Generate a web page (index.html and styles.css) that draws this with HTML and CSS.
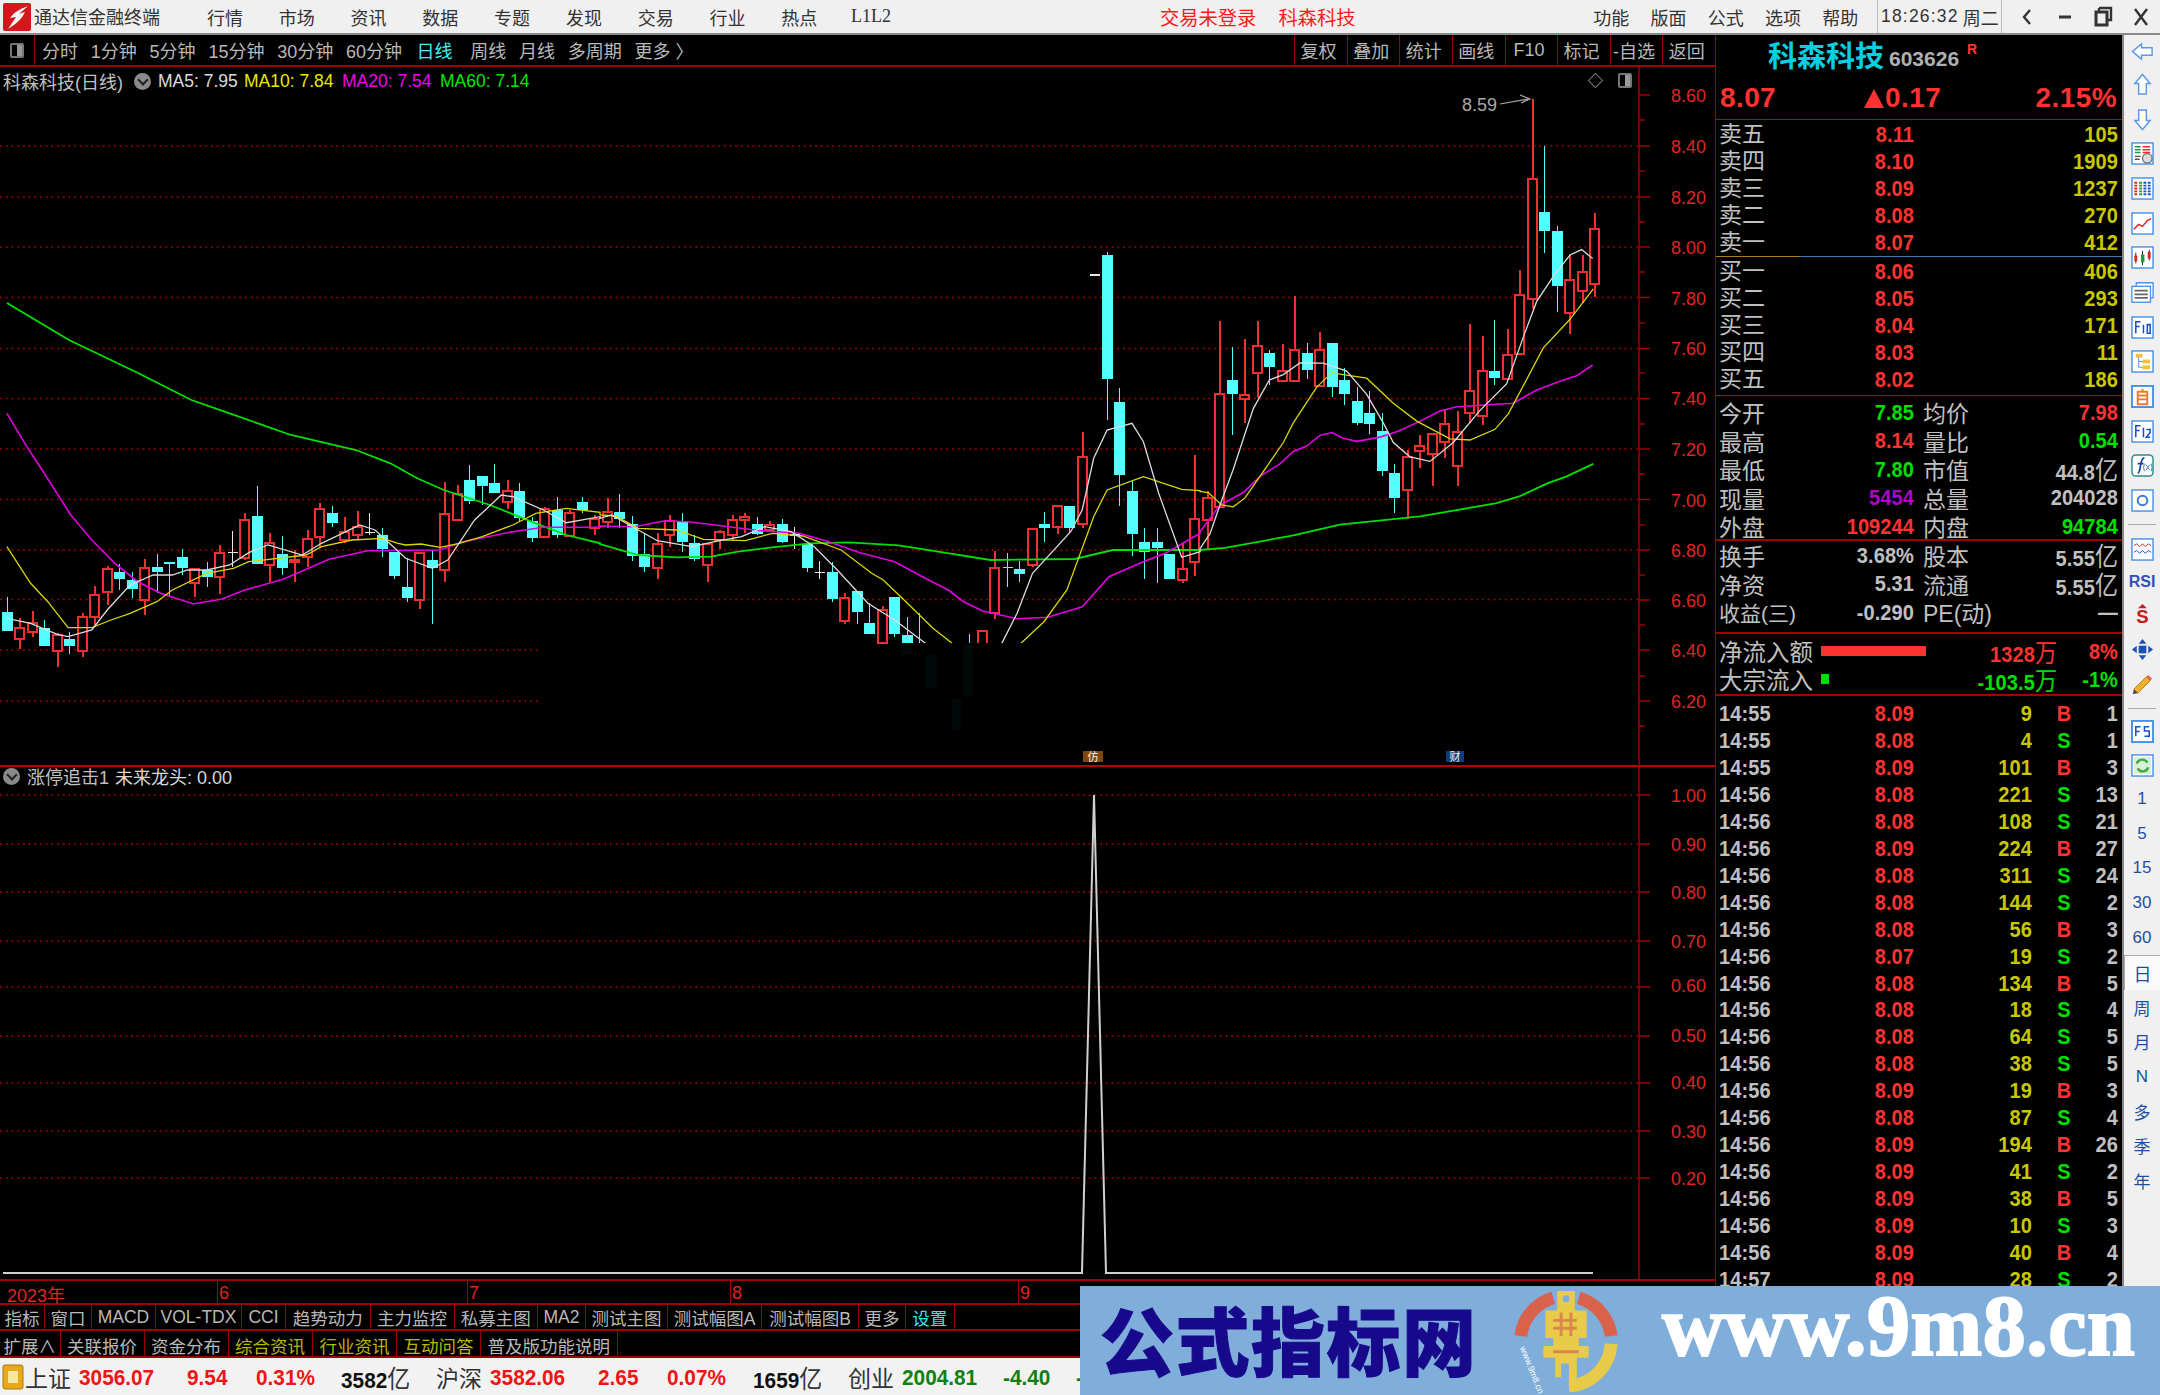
FILE: index.html
```html
<!DOCTYPE html>
<html lang="zh-CN">
<head>
<meta charset="utf-8">
<title>通达信金融终端</title>
<link rel="stylesheet" href="styles.css">
</head>
<body>
<div class="app">
  <header class="menubar">
    <svg class="logo" viewBox="0 0 28 28"><rect width="28" height="28" rx="2" fill="#d8141c"/><path d="M25 3 C17 6 11 9 7 15 L13 14 L5 26 C13 21 19 16 22 9 L16 11 Z" fill="#f4f4f4"/></svg>
    <span class="apptitle">通达信金融终端</span>
    <nav class="menu-main"><span>行情</span><span>市场</span><span>资讯</span><span>数据</span><span>专题</span><span>发现</span><span>交易</span><span>行业</span><span>热点</span><span class="l1l2">L1L2</span></nav>
    <div class="menu-red"><span>交易未登录</span><span>科森科技</span></div>
    <nav class="menu-right"><span>功能</span><span>版面</span><span>公式</span><span>选项</span><span>帮助</span></nav>
    <div class="clock"><span>18:26:32</span><span>周二</span></div>
    <div class="winctl">
      <svg viewBox="0 0 36 33"><path d="M21 10 L15 17 L21 24" fill="none" stroke="#333" stroke-width="2.4"/></svg>
      <svg viewBox="0 0 38 33"><path d="M13 17 H25" stroke="#333" stroke-width="3"/></svg>
      <svg viewBox="0 0 38 33"><path d="M15 8 H27 V20 H24 M15 8 V11" fill="none" stroke="#333" stroke-width="2.4"/><rect x="12" y="12" width="11" height="13" fill="none" stroke="#333" stroke-width="3"/></svg>
      <svg viewBox="0 0 38 33"><path d="M13 9 L25 25 M25 9 L13 25" stroke="#333" stroke-width="2.4"/></svg>
    </div>
  </header>

  <div class="workspace">
    <section class="left">
      <div class="toolbar">
        <div class="tb-icon"><span class="minibox"></span></div>
        <div class="tb-periods"><span>分时</span><span>1分钟</span><span>5分钟</span><span>15分钟</span><span>30分钟</span><span>60分钟</span><span class="on">日线</span><span>周线</span><span>月线</span><span>多周期</span><span>更多 〉</span></div>
        <div class="tb-actions"><span>复权</span><span>叠加</span><span>统计</span><span>画线</span><span>F10</span><span>标记</span><span>-自选</span><span>返回</span></div>
      </div>

      <div class="pane pane-main">
        <svg id="mainChart" class="chart" viewBox="0 67 1715 698" width="1715" height="698">
          <g class="grid"><path d="M0 146H1640M0 197H1640M0 247H1640M0 297.5H1640M0 348.5H1640M0 398.5H1640M0 449H1640M0 499.5H1640M0 550H1640M0 599.5H1640M0 650H538M0 701H538"/></g>
          <path class="axis" d="M1639 67V765M1639 95H1650M1639 120H1645M1639 146H1650M1639 171H1645M1639 197H1650M1639 222H1645M1639 247H1650M1639 272H1645M1639 297.5H1650M1639 323H1645M1639 348.5H1650M1639 373H1645M1639 398.5H1650M1639 424H1645M1639 449H1650M1639 474H1645M1639 499.5H1650M1639 525H1645M1639 550H1650M1639 575H1645M1639 600H1650M1639 625H1645M1639 650H1650M1639 676H1645M1639 701H1650M1639 726H1645"/>
          <g class="axis-labels"><text x="1671" y="102">8.60</text><text x="1671" y="153">8.40</text><text x="1671" y="204">8.20</text><text x="1671" y="254">8.00</text><text x="1671" y="305">7.80</text><text x="1671" y="355">7.60</text><text x="1671" y="405">7.40</text><text x="1671" y="456">7.20</text><text x="1671" y="507">7.00</text><text x="1671" y="557">6.80</text><text x="1671" y="607">6.60</text><text x="1671" y="657">6.40</text><text x="1671" y="708">6.20</text></g>
          <g id="candles"></g>
          <g id="maLines"></g>
          <g id="mask"></g>
          <text class="high-label" x="1462" y="111">8.59</text>
          <path class="high-arrow" d="M1500 104 L1528 99 M1520 95 L1530 99 L1521 103"/>
          <rect class="tag tag-a" x="1083" y="751" width="20" height="11"/><text class="tag-text" x="1093" y="761">仿</text>
          <rect class="tag tag-b" x="1446" y="751" width="18" height="11"/><text class="tag-text" x="1455" y="761">财</text>
        </svg>
        <div class="legend">
          <span class="lg-name">科森科技(日线)</span><span class="chev"></span>
          <span class="lg-5">MA5: 7.95</span><span class="lg-10">MA10: 7.84</span><span class="lg-20">MA20: 7.54</span><span class="lg-60">MA60: 7.14</span>
        </div>
        <div class="corner-icons"><span class="diamond"></span><span class="minibox"></span></div>
      </div>

      <div class="pane pane-sub">
        <svg class="chart" viewBox="0 765 1715 516" width="1715" height="516">
          <g class="grid"><path d="M0 795H1640M0 844H1640M0 892H1640M0 941H1640M0 987H1640M0 1036H1640M0 1083H1640M0 1131H1640M0 1178H1640"/></g>
          <path class="axis" d="M1639 765V1281M1639 795H1650M1639 844H1650M1639 892H1650M1639 941H1650M1639 987H1650M1639 1036H1650M1639 1083H1650M1639 1131H1650M1639 1178H1650"/>
          <g class="axis-labels"><text x="1671" y="802">1.00</text><text x="1671" y="851">0.90</text><text x="1671" y="899">0.80</text><text x="1671" y="948">0.70</text><text x="1671" y="992">0.60</text><text x="1671" y="1042">0.50</text><text x="1671" y="1089">0.40</text><text x="1671" y="1138">0.30</text><text x="1671" y="1185">0.20</text></g>
          <path class="signal" d="M3 1273H1082L1094 795L1106 1273H1593"/>
        </svg>
        <div class="legend legend-sub"><span class="chev"></span><span>涨停追击1</span><span class="lg-white">未来龙头: 0.00</span></div>
      </div>

      <div class="dates"><span class="d-y">2023年</span><span class="d-a">6</span><span class="d-b">7</span><span class="d-c">8</span><span class="d-d">9</span></div>

      <div class="tabs tabs-a"><span>指标</span><span>窗口</span><span>MACD</span><span>VOL-TDX</span><span>CCI</span><span>趋势动力</span><span>主力监控</span><span>私募主图</span><span>MA2</span><span>测试主图</span><span>测试幅图A</span><span>测试幅图B</span><span>更多</span><span class="cy">设置</span></div>
      <div class="tabs tabs-b"><span>扩展∧</span><span>关联报价</span><span>资金分布</span><span class="yl">综合资讯</span><span class="yl">行业资讯</span><span class="yl">互动问答</span><span>普及版功能说明</span></div>

      <div class="status">
        <svg viewBox="0 0 22 28"><rect x="1" y="2" width="20" height="24" rx="2" fill="#e8a818" stroke="#a87a10"/><rect x="6" y="8" width="10" height="12" fill="#f8e6a0"/></svg>
        <span class="st-l">上证</span><b class="up">3056.07</b><b class="up">9.54</b><b class="up">0.31%</b><b class="bk">3582<i>亿</i></b>
        <span class="st-l">沪深</span><b class="up">3582.06</b><b class="up">2.65</b><b class="up">0.07%</b><b class="bk">1659<i>亿</i></b>
        <span class="st-l">创业</span><b class="dn">2004.81</b><b class="dn">-4.40</b><b class="dn">-0.22%</b>
      </div>
    </section>

    <aside class="panel">
      <div class="p-title"><span class="p-name">科森科技</span><span class="p-code">603626</span><sup class="p-r">R</sup></div>
      <div class="p-price"><span>8.07</span><span class="p-chg"><svg viewBox="0 0 20 19"><path d="M10 0L20 19H0Z" fill="#ff3232"/></svg>0.17</span><span class="p-pct">2.15%</span></div>

      <div class="book sell">
        <div><span>卖五</span><b class="up">8.11</b><b class="yl">105</b></div>
        <div><span>卖四</span><b class="up">8.10</b><b class="yl">1909</b></div>
        <div><span>卖三</span><b class="up">8.09</b><b class="yl">1237</b></div>
        <div><span>卖二</span><b class="up">8.08</b><b class="yl">270</b></div>
        <div><span>卖一</span><b class="up">8.07</b><b class="yl">412</b></div>
      </div>
      <div class="book buy">
        <div><span>买一</span><b class="up">8.06</b><b class="yl">406</b></div>
        <div><span>买二</span><b class="up">8.05</b><b class="yl">293</b></div>
        <div><span>买三</span><b class="up">8.04</b><b class="yl">171</b></div>
        <div><span>买四</span><b class="up">8.03</b><b class="yl">11</b></div>
        <div><span>买五</span><b class="up">8.02</b><b class="yl">186</b></div>
      </div>

      <div class="stats s-one">
        <div><span>今开</span><b class="gn">7.85</b><span>均价</span><b class="up">7.98</b></div>
        <div><span>最高</span><b class="up">8.14</b><span>量比</span><b class="gn">0.54</b></div>
        <div><span>最低</span><b class="gn">7.80</b><span>市值</span><b>44.8<i>亿</i></b></div>
        <div><span>现量</span><b class="pu">5454</b><span>总量</span><b>204028</b></div>
        <div><span>外盘</span><b class="up">109244</b><span>内盘</span><b class="gn">94784</b></div>
      </div>
      <div class="stats s-two">
        <div><span>换手</span><b>3.68%</b><span>股本</span><b>5.55<i>亿</i></b></div>
        <div><span>净资</span><b>5.31</b><span>流通</span><b>5.55<i>亿</i></b></div>
        <div><span class="wide">收益(三)</span><b>-0.290</b><span>PE(动)</span><b>—</b></div>
      </div>
      <div class="flow">
        <div><span>净流入额</span><em class="bar bar-up"></em><b class="up">1328<i>万</i></b><b class="up">8%</b></div>
        <div><span>大宗流入</span><em class="bar bar-dn"></em><b class="gn">-103.5<i>万</i></b><b class="gn">-1%</b></div>
      </div>
      <div class="trades">
        <div><b>14:55</b><b class="up">8.09</b><b class="yl">9</b><b class="up">B</b><b>1</b></div>
        <div><b>14:55</b><b class="up">8.08</b><b class="yl">4</b><b class="gn">S</b><b>1</b></div>
        <div><b>14:55</b><b class="up">8.09</b><b class="yl">101</b><b class="up">B</b><b>3</b></div>
        <div><b>14:56</b><b class="up">8.08</b><b class="yl">221</b><b class="gn">S</b><b>13</b></div>
        <div><b>14:56</b><b class="up">8.08</b><b class="yl">108</b><b class="gn">S</b><b>21</b></div>
        <div><b>14:56</b><b class="up">8.09</b><b class="yl">224</b><b class="up">B</b><b>27</b></div>
        <div><b>14:56</b><b class="up">8.08</b><b class="yl">311</b><b class="gn">S</b><b>24</b></div>
        <div><b>14:56</b><b class="up">8.08</b><b class="yl">144</b><b class="gn">S</b><b>2</b></div>
        <div><b>14:56</b><b class="up">8.08</b><b class="yl">56</b><b class="up">B</b><b>3</b></div>
        <div><b>14:56</b><b class="up">8.07</b><b class="yl">19</b><b class="gn">S</b><b>2</b></div>
        <div><b>14:56</b><b class="up">8.08</b><b class="yl">134</b><b class="up">B</b><b>5</b></div>
        <div><b>14:56</b><b class="up">8.08</b><b class="yl">18</b><b class="gn">S</b><b>4</b></div>
        <div><b>14:56</b><b class="up">8.08</b><b class="yl">64</b><b class="gn">S</b><b>5</b></div>
        <div><b>14:56</b><b class="up">8.08</b><b class="yl">38</b><b class="gn">S</b><b>5</b></div>
        <div><b>14:56</b><b class="up">8.09</b><b class="yl">19</b><b class="up">B</b><b>3</b></div>
        <div><b>14:56</b><b class="up">8.08</b><b class="yl">87</b><b class="gn">S</b><b>4</b></div>
        <div><b>14:56</b><b class="up">8.09</b><b class="yl">194</b><b class="up">B</b><b>26</b></div>
        <div><b>14:56</b><b class="up">8.09</b><b class="yl">41</b><b class="gn">S</b><b>2</b></div>
        <div><b>14:56</b><b class="up">8.09</b><b class="yl">38</b><b class="up">B</b><b>5</b></div>
        <div><b>14:56</b><b class="up">8.09</b><b class="yl">10</b><b class="gn">S</b><b>3</b></div>
        <div><b>14:56</b><b class="up">8.09</b><b class="yl">40</b><b class="up">B</b><b>4</b></div>
        <div><b>14:57</b><b class="up">8.09</b><b class="yl">28</b><b class="gn">S</b><b>2</b></div>
      </div>
    </aside>

    <nav class="strip">
      <div class="r-a r-first"><svg viewBox="0 0 24 20"><path d="M1.500 10L11 2V6H22V14H11V18Z" class="ic-arrow"/></svg></div>
      <div class="r-a"><svg viewBox="0 0 20 24"><path d="M10 1.500L18 11H14V22H6V11H2Z" class="ic-arrow"/></svg></div>
      <div class="r-a"><svg viewBox="0 0 20 24"><path d="M10 22.500L18 13H14V2H6V13H2Z" class="ic-arrow"/></svg></div>
      <div class="r-a"><svg viewBox="0 0 24 24"><rect x="1" y="1" width="22" height="22" class="ic-box"/><path d="M4 5H10M4 8H10M4 11H10" stroke="#1a9a3a" stroke-width="1.500"/><path d="M12 5H20M12 8H20M12 11H20" stroke="#e83030" stroke-width="1.500"/><path d="M4 15H10M4 18H9" stroke="#555" stroke-width="1.500"/><circle cx="17" cy="17" r="5" fill="#ddd" stroke="#777" stroke-width="1.500"/></svg></div>
      <div class="r-a"><svg viewBox="0 0 24 24"><rect x="1" y="1" width="22" height="22" class="ic-box"/><path d="M5 5V19" stroke="#e02020" stroke-width="3" stroke-dasharray="2 1"/><path d="M10 5V19" stroke="#1a9a3a" stroke-width="3" stroke-dasharray="2 1"/><path d="M14.500 5V19" stroke="#2050d0" stroke-width="3" stroke-dasharray="2 1"/><path d="M19 5V19" stroke="#2050d0" stroke-width="3" stroke-dasharray="2 1"/></svg></div>
      <div class="r-a"><svg viewBox="0 0 24 24"><rect x="1" y="1" width="22" height="22" class="ic-box"/><path d="M3 18L8 13L12 15L17 9L21 7" fill="none" stroke="#e02020" stroke-width="1.500"/></svg></div>
      <div class="r-a"><svg viewBox="0 0 24 24"><rect x="1" y="1" width="22" height="22" class="ic-box"/><path d="M5 7V18M12 5V20M19 4V15" stroke="#222" stroke-width="1"/><rect x="3.500" y="10" width="3" height="6" fill="#e02020"/><rect x="10.500" y="9" width="3.500" height="8" fill="#1a9a3a"/><rect x="17.500" y="6" width="3" height="7" fill="#e02020"/></svg></div>
      <div class="r-a"><svg viewBox="0 0 26 24"><path d="M6 4V1H25V18H22" fill="#fff" class="ic-box"/><rect x="1" y="5" width="21" height="18" class="ic-box"/><path d="M4 10H19M4 14H19M4 18H19" stroke="#666" stroke-width="2"/></svg></div>
      <div class="r-a"><svg viewBox="0 0 24 24"><rect x="1" y="1" width="22" height="22" class="ic-box"/><path d="M5 18V6H10M5 11H9M13 9V18M17 9H20V18H17Z" fill="none" stroke="#1c4fc0" stroke-width="1.600"/></svg></div>
      <div class="r-a"><svg viewBox="0 0 24 24"><rect x="1" y="1" width="22" height="22" class="ic-box"/><rect x="5" y="4" width="7" height="4" fill="#f2c040"/><rect x="12" y="10" width="8" height="4" fill="#f2c040"/><rect x="12" y="16" width="8" height="4" fill="#f2c040"/><path d="M8 8V18H12M8 12H12" fill="none" stroke="#4a90e8"/></svg></div>
      <div class="r-a"><svg viewBox="0 0 24 24"><rect x="1" y="1" width="22" height="22" class="ic-box ic-bold"/><path d="M7 7H17V20H7ZM7 11H17M7 15H17M12 4V7" fill="none" stroke="#f07830" stroke-width="2"/></svg></div>
      <div class="r-a"><svg viewBox="0 0 24 24"><rect x="1" y="1" width="22" height="22" class="ic-box"/><path d="M5 18V6H10M5 11H9M12 9H13V18M16 10H20V13L16 18H20" fill="none" stroke="#1c4fc0" stroke-width="1.600"/></svg></div>
      <div class="r-a"><svg viewBox="0 0 24 24"><rect x="1" y="1" width="22" height="22" rx="4" fill="#fff" stroke="#2a8a8a" stroke-width="1.500"/><path d="M7 20C9 20 9 17 10 12C11 6 12 4 14 4M7 10H13" fill="none" stroke="#1c3fa0" stroke-width="1.800"/><path d="M14 10Q12 14 14 18M21 10Q23 14 21 18M15.500 11L19.500 17M19.500 11L15.500 17" fill="none" stroke="#4a78c8"/></svg></div>
      <div class="r-a"><svg viewBox="0 0 24 24"><rect x="1" y="1" width="22" height="22" class="ic-box"/><circle cx="12" cy="12" r="5" fill="none" stroke="#3a7ad8" stroke-width="2"/></svg></div>
      <div class="r-sep r-sep-a"></div>
      <div class="r-a"><svg viewBox="0 0 24 24"><rect x="1" y="1" width="22" height="22" class="ic-box"/><path d="M3 8L6 6L9 9L12 6L15 9L18 6L21 8" fill="none" stroke="#e02020"/><path d="M3 15L6 13L9 16L12 13L15 16L18 13L21 15" fill="none" stroke="#2050d0"/></svg></div>
      <div class="r-a r-rsi">RSI</div>
      <div class="r-a r-s"><svg viewBox="0 0 22 26"><path d="M11 1L16 6H6Z" fill="#c02020"/><text class="ic-s" x="11" y="23">S</text></svg></div>
      <div class="r-a"><svg viewBox="0 0 24 24"><path d="M12 1L16 6H8ZM12 23L16 18H8ZM1 12L6 8V16ZM23 12L18 8V16Z" fill="#1a50b8"/><rect x="8" y="8" width="8" height="8" fill="#1a50b8"/></svg></div>
      <div class="r-a"><svg viewBox="0 0 24 24"><path d="M3 17L16 4L20 8L7 21Z" fill="#f0b030" stroke="#a87818"/><path d="M16 4L18 2L22 6L20 8Z" fill="#e06060"/><path d="M3 17L2 22L7 21Z" fill="#444"/></svg></div>
      <div class="r-sep r-sep-b"></div>
      <div class="r-a"><svg viewBox="0 0 24 24"><rect x="1" y="1" width="22" height="22" class="ic-box ic-bold"/><path d="M5 17V7H10M5 12H9M19 7H14V11.500H19V17H14" fill="none" stroke="#1c4fc0" stroke-width="1.600"/></svg></div>
      <div class="r-a r-sync"><svg viewBox="0 0 24 24"><rect x="1" y="1" width="22" height="22" class="ic-box"/><rect x="3" y="3" width="18" height="18" fill="#d8efd8"/><path d="M6 10A6 6 0 0 1 17 9M18 14A6 6 0 0 1 7 15" fill="none" stroke="#40a840" stroke-width="2.500"/></svg></div>
      <div class="r-a r-t">1</div><div class="r-a r-t">5</div><div class="r-a r-t">15</div><div class="r-a r-t">30</div><div class="r-a r-t">60</div>
      <div class="r-a r-t r-day">日</div><div class="r-a r-t">周</div><div class="r-a r-t">月</div><div class="r-a r-t">N</div><div class="r-a r-t">多</div><div class="r-a r-t">季</div><div class="r-a r-t">年</div>
    </nav>
  </div>

  <aside class="banner">
    <span class="bn-cn">公式指标网</span>
    <svg class="bn-logo" viewBox="0 0 110 110">
      <path d="M9 50A46 46 0 0 1 42 11M68 11A46 46 0 0 1 101 50" fill="none" stroke="#d9624c" stroke-width="13"/>
      <path d="M101 58A46 46 0 0 1 58 101" fill="none" stroke="#e8cb4a" stroke-width="13"/>
      <path d="M46 4H64V24H76V52H68V60H78V72H66V106H58V78H50V92H44V72H32V60H42V52H34V24H46Z" fill="#e8cb4a"/>
      <circle cx="55" cy="12" r="3.500" fill="#80aedb"/>
      <path d="M42 34H66M42 42H66M42 66H68M50 26V50M60 26V50" stroke="#d9884c" stroke-width="3"/>
      <text class="bn-arc" transform="translate(8 62) rotate(68)">www.9m8.cn</text>
    </svg>
    <span class="bn-url">www.9m8.cn</span>
  </aside>
</div>
<script src="chart.js"></script>
</body>
</html>
```
FILE: styles.css
```css
*{box-sizing:border-box}
html,body{margin:0;padding:0;background:#000}
body{width:2160px;height:1395px;overflow:hidden;font-family:"Liberation Sans","Noto Sans CJK SC",sans-serif;color:#c0c0c0}
i{font-style:normal;font-weight:400}
.app{position:relative;width:2160px;height:1395px;display:flex;flex-direction:column}

/* top menu */
.menubar{height:35px;background:#f0f0f0;border-bottom:2px solid #8a8a8a;display:flex;align-items:center;color:#333;font-size:18px;flex:none}
.logo{width:28px;height:28px;margin-left:3px;flex:none}
.apptitle{margin-left:3px;width:130px;white-space:nowrap;margin-top:-2px}
.menu-main{display:flex;margin-left:27px}
.menu-main span{width:71.8px;text-align:center}
.menu-main .l1l2{font-family:"Liberation Serif",serif;font-size:18px;padding-top:2px}
.menu-red{display:flex;gap:22px;margin-left:253px;color:#ff1a1a;font-size:19.3px;width:228px;white-space:nowrap}
.menu-right{display:flex;margin-left:198px}
.menu-right span{width:57.3px;text-align:center}
.clock{display:flex;align-items:center;gap:4px;height:33px;margin-left:8px;padding:0 3px;width:125px;border-left:1px solid #bbb;border-right:1px solid #bbb;font-size:17.5px;white-space:nowrap}
.clock span:first-child{letter-spacing:1.2px}
.clock span:last-child{font-size:18px}
.winctl{display:flex;margin-left:6px}
.winctl svg{width:38px;height:33px;display:block}

/* workspace */
.workspace{flex:1;display:flex;min-height:0}
.left{width:1715px;flex:none;display:flex;flex-direction:column;background:#000}

/* toolbar */
.toolbar{height:32px;flex:none;display:flex;align-items:center;border-bottom:2px solid #a00000;font-size:18px;color:#b8b8b8}
.tb-icon{width:35px;height:30px;border-right:1px solid #a00000;display:flex;align-items:center;justify-content:center}
.minibox{display:block;width:14px;height:15px;border:2px solid #777;border-radius:2px;background:linear-gradient(90deg,#000 0 50%,#999 50% 100%)}
.tb-periods{display:flex;gap:12.8px;margin-left:7px;white-space:nowrap}
.tb-periods .on{color:#40f0f0;margin-left:1.500px;margin-right:5px}
.tb-actions{margin-left:auto;display:grid;grid-template-columns:repeat(8,52.6px);height:30px}
.tb-actions span{border-left:1px solid #a00000;display:flex;align-items:center;justify-content:center;white-space:nowrap;padding-right:5px}

/* panes */
.pane{position:relative;flex:none}
.pane-main{height:698px}
.pane-sub{height:516px;border-top:2px solid #c00000;border-bottom:2px solid #a00000}
.pane-sub .chart{margin-top:-2px}
.chart{display:block}
.grid path{stroke:#a00000;stroke-width:1.500;stroke-dasharray:2 3.700;fill:none}
.axis{stroke:#a00000;stroke-width:1.500;fill:none}
.axis-labels text{fill:#e02424;font-size:18px;font-family:"Liberation Sans",sans-serif}
.high-label{fill:#a8a8a8;font-size:18px}
.high-arrow{fill:none;stroke:#a8a8a8;stroke-width:1.200}
.tag-a{fill:#80480e}
.tag-b{fill:#103c78}
.tag-text{fill:#f0f0f0;font-size:11px;text-anchor:middle}
.signal{fill:none;stroke:#d0d0d0;stroke-width:2}
.legend{position:absolute;left:3px;top:3px;display:flex;align-items:center;font-size:17.5px;color:#c0c0c0;white-space:nowrap;height:22px}
.lg-name{width:131px;font-size:18px}
.chev{width:17px;height:17px;border-radius:50%;background:#8a8a8a;position:relative;flex:none}
.chev::after{content:"";position:absolute;left:4.500px;top:3px;width:6px;height:6px;border:solid #222;border-width:0 2px 2px 0;transform:rotate(45deg)}
.lg-5{margin-left:7px;color:#dcdcdc;width:86px}
.lg-10{color:#e8e800;width:98px}
.lg-20{color:#f000f0;width:98px}
.lg-60{color:#00e800}
.legend-sub{top:-2px;left:3px;gap:7px;height:22px;font-size:18px}
.lg-white{margin-left:-1px;color:#d8d8d8}
.corner-icons{position:absolute;left:1590px;top:6px;display:flex;align-items:center;gap:17px}
.diamond{display:block;width:11px;height:11px;border:1px solid #777;transform:rotate(45deg)}

/* date axis */
.dates{height:24px;flex:none;display:flex;align-items:center;color:#e02424;font-size:18px;border-bottom:2px solid #a00000}
.dates span{display:flex;align-items:center;height:100%;padding-left:1px;padding-top:3px}
.d-y{width:217px;padding-left:7px !important}
.d-a{width:250px;border-left:1px solid #a00000}
.d-b{width:263px;border-left:1px solid #a00000}
.d-c{width:288px;border-left:1px solid #a00000}
.d-d{border-left:1px solid #a00000}

/* tabs */
.tabs{height:26px;flex:none;display:grid;font-size:17.5px;color:#b8b8b8;border-bottom:2px solid #a00000}
.tabs span{border-right:1px solid #a00000;display:flex;align-items:center;justify-content:center;white-space:nowrap;overflow:hidden;padding-top:1px}
.tabs-a{grid-template-columns:45px 47px 64px 86px 44px 84.500px 84px 83.500px 48px 82px 94px 97px 47px 48.500px}
.tabs-b{height:27px;grid-template-columns:60.600px 84px 84px 84px 84.700px 83.300px 137.300px}
.tabs-b span{padding-top:3px}
.tabs .cy{color:#30e8e8}
.tabs .yl{color:#b8b800}

/* status */
.status{flex:1;min-height:0;background:#f2f2f2;display:grid;grid-template-columns:23px 54px 108px 69px 85px 95px 54px 108px 69px 86px 95px 54px 101px 73px 60px;align-items:center;padding-left:2px;padding-top:1px;font-size:20.8px;overflow:hidden;white-space:nowrap}
.status svg{width:22px;height:28px}
.st-l{font-size:23px;color:#333}
.status b{font-weight:700;transform:scaleY(1.1)}
.status i{font-size:23px;color:#333}
.status .up{color:#f01414}
.status .dn{color:#108010}
.status .bk{color:#111}

/* right panel */
.panel{width:409px;flex:none;background:#000;border-left:1px solid #a00000;border-right:2px solid #888;overflow:hidden;font-size:23px}
.panel .book b,.panel .stats b,.panel .flow b,.panel .trades b{font-size:20px;font-weight:700;white-space:nowrap;letter-spacing:.1px;transform:scaleY(1.12)}
.panel .up{color:#ff3232}
.panel .gn{color:#00e000}
.panel .yl{color:#c8c800}
.panel .pu{color:#b000c8}
.p-title{height:42px;display:flex;align-items:center;padding-left:52px}
.p-name{font-size:29px;font-weight:700;color:#08cfe0;margin-top:-4px}
.p-code{font-size:21px;font-weight:700;color:#b0b0b0;margin-left:5px;margin-top:5px}
.p-r{font-size:14px;font-weight:700;color:#ff3232;margin-left:8px;margin-top:-14px}
.p-price{height:43px;display:flex;align-items:center;padding:0 5px 0 4px;font-size:28px;font-weight:700;color:#ff3232;border-bottom:1px solid #c00000;letter-spacing:.4px}
.p-chg{display:flex;align-items:center;gap:1px;margin-left:88px}
.p-chg svg{width:20px;height:19px}
.p-pct{margin-left:auto}
.book>div{height:27px;display:grid;grid-template-columns:60px 135px 204px;align-items:center;padding-left:3px;line-height:27px}
.book>div b:nth-child(2),.book>div b:nth-child(3){text-align:right}
.sell{padding-top:1px;border-bottom:1px solid;border-image:linear-gradient(90deg,#b07820 0 85px,#3a78b8 85px 100%) 1;height:137px}
.buy{padding-top:1px;height:139px;border-bottom:1px solid #c00000}
.stats>div{height:28.500px;display:grid;grid-template-columns:60px 135px 1fr auto;align-items:center;padding-right:4px;padding-left:3px}
.stats>div>b:nth-child(2){text-align:right}
.stats>div>span:nth-child(3){margin-left:9px}
.stats b i{font-size:23px;color:#c0c0c0}
.stats .wide{white-space:nowrap;font-size:21px}
.s-one{margin-top:-1px;height:146px;border-bottom:2px solid #a00000}
.s-two{margin-top:-3px;height:96px;border-bottom:2px solid #a00000}
.flow{height:62px;border-bottom:2px solid #a00000}
.flow>div{height:28px;display:grid;grid-template-columns:102px 105px 131px 61px;align-items:center;padding-left:3px}
.flow span{font-size:23.500px;white-space:nowrap}
.flow b{text-align:right}
.flow b i{font-size:22px}
.bar{display:block;height:10px}
.bar-up{background:#ff3232;width:105px}
.bar-dn{background:#00e000;width:8px}
.trades{padding-top:4px}
.trades>div{height:26.960px;display:grid;grid-template-columns:60px 135px 118px 64px 22px;align-items:center;padding-left:3px}
.trades b:nth-child(2),.trades b:nth-child(3),.trades b:nth-child(5){text-align:right;justify-self:end}
.trades b:nth-child(4){text-align:center}

/* icon strip */
.strip{width:36px;flex:none;background:#f0f0f0;color:#1f4ea0;font-size:16px;display:flex;flex-direction:column;overflow:hidden}
.strip>div{display:flex;align-items:center;justify-content:center;flex:none}
.strip svg{width:23px;height:23px;display:block}
.r-a{height:34.700px}
.r-first{height:32px}
.r-sep::after{content:"";display:block;width:28px;height:1px;background:#aaa}
.r-sep-a{height:14px}
.r-sep-b{height:12px}
.r-rsi{height:30px;font-weight:700;font-size:16px;color:#3050b8}
.r-s{height:36px}
.r-sync{height:33px}
.ic-arrow{fill:#fff;stroke:#5a98e8;stroke-width:1.500}
.ic-box{fill:#fff;stroke:#4a90e8;stroke-width:1.500}
.ic-bold{stroke-width:2}
.ic-s{font-size:21px;font-weight:700;fill:#c02020;text-anchor:middle}
.r-t{font-size:17px}
.r-day{background:#fafafa;border-top:1px solid #aaa;border-left:1px solid #aaa;font-size:18px}

/* watermark banner */
.banner{position:absolute;left:1080px;top:1286px;width:1080px;height:109px;background:#80aedb;display:flex;align-items:center;overflow:hidden}
.bn-cn{margin-left:20px;font-size:74px;font-weight:900;color:#18088c;letter-spacing:1.500px;white-space:nowrap;line-height:1;width:382px;-webkit-text-stroke:1px #18088c;font-family:"Noto Sans CJK SC",sans-serif;margin-top:-6px}
.bn-logo{width:108px;height:108px;margin-left:30px;flex:none}
.bn-arc{font-size:9px;fill:#fff}
.bn-url{margin-left:42px;font-family:"Liberation Serif",serif;font-weight:700;font-size:86px;color:#fff;-webkit-text-stroke:2px #fff;letter-spacing:.5px;white-space:nowrap;line-height:1;margin-top:-29px}
```
FILE: chart.js
```javascript
// Candles: [colour, bodyTop, bodyBottom, wickTop, wickBottom], measured on the source chart.
var SVG = "http://www.w3.org/2000/svg";
var y3 = function (v) { return 400 + v / 3; };
var y28 = function (v) { return 80 + v / 2.8; };

var a = [
["c",637,693,592,693],["r",683,716,655,748],["r",668,697,632,712],["c",683,739,659,739],["r",705,752,700,802],
["c",718,739,697,762],["r",652,752,640,771],["r",585,652,557,680],["r",508,576,498,615],["c",516,538,493,570],
["c",539,568,516,595],["r",504,599,476,645],["c",502,515,461,580],["c",485,492,485,590],["c",470,505,447,525],
["r",508,549,505,592],["c",510,530,485,560],["r",458,531,435,582],["w",458,458,393,500],["r",360,475,340,480],
["c",349,491,259,491],["r",428,495,398,545],["c",462,505,407,525],["r",481,487,450,545],["r",418,472,390,500],
["r",327,410,308,445],["c",340,370,318,380],["r",395,420,352,430],["r",380,405,332,420],["w",397,397,340,405],
["c",404,447,385,470],["c",457,528,457,538],["c",560,595,475,605],["r",458,599,458,627],["c",480,504,450,672],
["r",341,509,245,547],["r",282,361,255,361],["c",241,302,196,312],["c",227,258,227,315],["c",250,280,191,280],
["r",274,306,241,327],["c",272,355,250,365],["c",362,415,350,425],["r",328,410,320,415],["c",330,405,290,415],
["r",338,408,330,410],["c",305,330,290,340],["r",358,385,345,405],
["r",336,366,295,385],["c",335,358,282,385],["c",371,468,348,483],["c",462,500,400,515],["r",431,505,398,538],
["r",362,405,345,440],["c",362,425,340,457],["c",428,478,405,483],["r",431,496,431,547],["r",395,420,390,447],
["r",360,405,345,420],["r",350,360,340,398],["c",372,402,350,405],["r",375,390,362,392],["c",372,425,358,430],
["w",405,405,380,447],["c",432,505,432,515],["w",517,517,483,537],["c",516,596,485,605],["r",593,662,578,672],
["c",574,636,574,672],["c",669,703,610,703],["r",629,730,618,730],["c",592,703,592,712],["c",705,735,650,735],
["c",900,905,640,730],null,null,null,["c",900,905,703,730],["r",692,790,692,790],
["r",503,640,453,658],["x",503,503,460,560],["c",507,523,483,547],["r",386,495,386,500],["c",371,384,335,425],
["r",318,382,318,402],["c",318,384,318,395],["r",170,373,97,383],["w",-375,-375,-378,-372],["c",-435,-63,-445,60],
["c",5,225,-36,317],["c",272,402,240,468],["c",426,456,385,537],["c",426,445,385,550],["c",461,537,461,537],
["r",508,540,430,550],["r",358,486,165,527]
];
var b = [
["r",1170,1232,1150,1315],["r",878,1195,676,1195],["c",840,880,748,995],["r",882,892,726,960],["r",744,820,676,890],
["c",764,804,756,855],["r",815,842,738,842],["r",756,842,605,842],["c",764,812,735,838],["r",756,858,705,858],
["c",735,860,735,888],["c",840,880,805,910],["c",899,960,860,965],["c",932,964,870,990],["c",983,1095,932,1108],
["c",1100,1170,1075,1212],["r",1055,1148,1035,1228],["r",1026,1040,995,1085],["r",990,1048,990,1137],["r",962,1013,925,1057],
["r",985,1080,928,1137],["r",870,933,684,960],["r",816,942,717,965],["c",814,834,671,855],["r",770,836,696,836],
["r",601,766,533,766],["r",277,613,53,640],["c",369,423,184,485],["c",424,578,410,650],["r",560,652,490,712],
["r",538,590,490,625],["r",416,572,373,607]
];

function el(name, attrs, parent) {
  var n = document.createElementNS(SVG, name);
  for (var k in attrs) n.setAttribute(k, attrs[k]);
  parent.appendChild(n);
  return n;
}

function candle(parent, i, d, fy) {
  if (!d) return;
  var x = Math.round(6.5 + 12.5 * i) + 0.5;
  var t = fy(d[1]), bt = fy(d[2]), wt = fy(d[3]), wb = fy(d[4]);
  var col = { c: "#54ffff", r: "#f03030", w: "#e8e8e8", x: "#54ffff" }[d[0]];
  var p = { stroke: col, "stroke-width": d[0] === "r" ? 2 : 1.6, "shape-rendering": "crispEdges" };
  if (d[0] === "w" || d[0] === "x") {
    el("path", Object.assign({ d: "M" + x + " " + wt + "V" + wb + "M" + (x - 5) + " " + t + "H" + (x + 5), fill: "none" }, p), parent);
    return;
  }
  el("path", Object.assign({ d: "M" + x + " " + wt + "V" + t + "M" + x + " " + bt + "V" + wb, fill: "none" }, p), parent);
  if (d[0] === "r") {
    el("rect", { x: x - 4.5, y: t, width: 9, height: Math.max(bt - t, 2), fill: "#000", stroke: col, "stroke-width": 2, "shape-rendering": "crispEdges" }, parent);
  } else {
    el("rect", { x: x - 5.5, y: t, width: 11, height: Math.max(bt - t, 2), fill: col, "shape-rendering": "crispEdges" }, parent);
  }
}

var cg = document.getElementById("candles");
a.forEach(function (d, i) { candle(cg, i, d, y3); });
b.forEach(function (d, i) { candle(cg, i + 96, d, y28); });

function pts(r, z7, z8, z9) {
  var out = [];
  for (var i = 0; i < r.length; i += 2) out.push(r[i] + "," + r[i + 1]);
  for (i = 0; i < z7.length; i += 2) out.push((z7[i] / 2.613).toFixed(1) + "," + y3(z7[i + 1]).toFixed(1));
  for (i = 0; i < z8.length; i += 2) out.push((600 + z8[i] / 2.613).toFixed(1) + "," + y3(z8[i + 1]).toFixed(1));
  for (i = 0; i < z9.length; i += 2) out.push((1200 + z9[i] / 3).toFixed(1) + "," + y28(z9[i + 1]).toFixed(1));
  return out.join(" ");
}

var lines = [
  ["#00e000", 1.8, pts([7,303,69,340,138,373],
    [500,0,600,40,760,105,930,150,1020,190,1090,235,1160,270,1280,315,1400,370,1480,405,1568,430],
    [0,432,100,465,200,472,290,470,360,455,450,442,550,430,650,427,780,436,900,458,1020,480,1240,477,1340,450,1568,450],
    [0,1316,75,1310,280,1275,420,1245,660,1222,890,1185,960,1165,1040,1130,1100,1110,1180,1075])],
  ["#e000e0", 1.6, pts([],
    [18,40,70,140,110,210,185,345,240,420,300,490,360,545,420,580,505,612,580,597,640,570,740,538,860,478,960,452,1150,450,1210,425,1340,395,1420,382,1568,382],
    [0,378,90,380,170,362,230,365,300,375,420,392,520,400,590,422,680,458,770,485,850,535,910,570,950,605,1000,633,1090,656,1170,652,1260,620,1330,530,1420,485,1480,458,1568,400],
    [0,1265,60,1190,130,1155,180,1110,240,1075,280,1040,320,1025,360,995,395,987,430,1003,470,1012,540,1000,590,985,650,960,720,927,770,915,940,905,1010,868,1090,840,1130,828,1178,798])],
  ["#d8d800", 1.3, pts([],
    [18,440,80,550,125,605,178,683,240,683,290,660,340,640,410,605,450,570,540,520,610,505,650,485,800,465,840,440,920,420,1000,415,1040,430,1060,435,1100,432,1150,442,1200,430,1260,410,1340,375,1400,340,1480,325,1568,337],
    [0,345,40,348,100,385,200,390,270,418,380,422,450,400,530,408,630,450,710,520,740,540,790,595,870,685,920,730,1000,790,1100,730,1160,665,1220,570,1290,350,1325,270,1420,230,1520,268,1568,272],
    [0,1152,25,1155,65,1190,100,1195,135,1170,180,1110,250,1015,280,960,350,860,395,820,500,835,580,905,650,955,750,1005,810,1008,885,978,925,935,1030,750,1110,670,1180,585])],
  ["#dcdcdc", 1.3, pts([],
    [18,655,80,670,150,703,178,710,240,690,280,630,340,555,400,525,450,525,490,510,540,510,600,495,650,458,700,435,790,465,840,430,940,375,980,390,1060,475,1130,505,1170,480,1240,360,1310,285,1340,290,1420,330,1480,368,1568,350],
    [0,355,30,345,100,390,150,422,240,440,300,425,370,410,430,380,500,395,560,440,620,510,700,610,770,660,850,730,950,880,1050,730,1090,640,1130,520,1230,395,1260,330,1290,175,1325,90,1390,70,1420,125,1460,280,1520,472,1568,455],
    [0,1312,30,1270,60,1190,100,1090,160,920,208,840,250,825,300,792,370,793,440,815,500,880,550,960,580,1015,630,1055,690,1068,760,1015,840,925,920,850,970,720,1010,620,1060,550,1110,490,1145,475,1178,500])]
];
var mg = document.getElementById("maLines");
lines.forEach(function (l) {
  el("polyline", { points: l[2], fill: "none", stroke: l[0], "stroke-width": l[1] }, mg);
});

// The dark patch that hides the low of the chart in the source, with its faint ghosts.
var mask = document.getElementById("mask");
el("rect", { x: 900, y: 643, width: 125, height: 115, fill: "#000" }, mask);
[[785,735,30,30],[850,765,30,100],[918,895,27,95],[948,735,27,155]].forEach(function (r) {
  el("rect", { x: 600 + r[0] / 2.613, y: y3(r[1]), width: r[2] / 2.613, height: r[3] / 3, fill: "#020708" }, mask);
});
```
